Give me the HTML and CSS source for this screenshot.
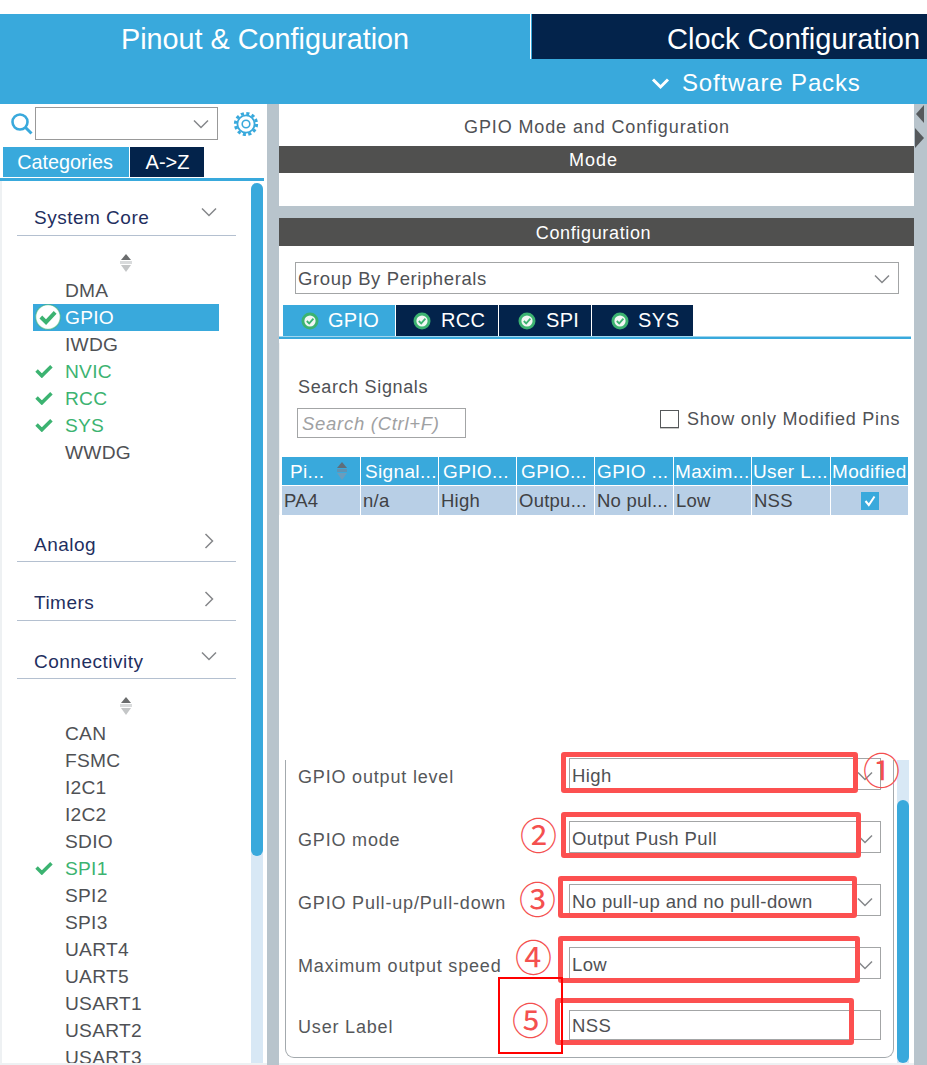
FILE: index.html
```html
<!DOCTYPE html>
<html lang="en">
<head>
<meta charset="utf-8">
<title>Pinout &amp; Configuration</title>
<link rel="stylesheet" href="styles.css">
</head>
<body>
<svg class="defs" width="0" height="0" aria-hidden="true">
  <symbol id="chev-down" viewBox="0 0 16 10"><path d="M1 1.5 8 8.5 15 1.5" fill="none" stroke="#85878a" stroke-width="1.5"/></symbol>
  <symbol id="chev-right" viewBox="0 0 10 16"><path d="M1.5 1 8.5 8 1.5 15" fill="none" stroke="#85878a" stroke-width="1.5"/></symbol>
  <symbol id="sort" viewBox="0 0 14 18"><path d="M7 0 12 6H2Z" fill="#6b6d6e"/><rect x="1" y="7" width="12" height="3" fill="#d9dbdc"/><path d="M7 18 12 11H2Z" fill="#c4c6c7"/></symbol>
  <symbol id="sort-th" viewBox="0 0 14 18"><path d="M7 0 12 6H2Z" fill="#5f6f7a"/><rect x="2" y="7" width="10" height="3" fill="#5f93b3"/><path d="M7 18 12 11H2Z" fill="#6a9dbd"/></symbol>
  <symbol id="check" viewBox="0 0 20 16"><path d="M1.5 7.5 7.5 13.5 18.5 2.5" fill="none" stroke="#3cb371" stroke-width="4"/></symbol>
  <symbol id="badge" viewBox="0 0 20 20"><circle cx="10" cy="10" r="9.5" fill="#fff"/><circle cx="10" cy="10" r="9.5" fill="none" stroke="#3cb371" stroke-width="1" opacity=".55"/><path d="M4.5 10 8.5 14 15.5 6.5" fill="none" stroke="#3cb371" stroke-width="3"/></symbol>
  <symbol id="tab-badge" viewBox="0 0 18 18"><circle cx="9" cy="9" r="8.5" fill="#3cb371"/><circle cx="9" cy="9" r="5.6" fill="#f2f7f4"/><path d="M5.8 9 8.2 11.4 12.4 6.6" fill="none" stroke="#3cb371" stroke-width="1.8"/></symbol>
</svg>

<div class="page">
  <header class="header">
    <div class="header-tabs">
      <div class="tab-pinout">Pinout &amp; Configuration</div>
      <div class="tab-clock">Clock Configuration</div>
    </div>
    <div class="packs">
      <svg class="packs-chev" width="19" height="13" viewBox="0 0 19 13"><path d="M2 2.5 9.5 10 17 2.5" fill="none" stroke="#fff" stroke-width="3"/></svg>
      <span>Software Packs</span>
    </div>
  </header>

  <div class="main">
    <aside class="side">
      <div class="search-row">
        <svg class="search-icon" width="23" height="24" viewBox="0 0 23 24"><circle cx="10" cy="10" r="7.5" fill="none" stroke="#39a9dc" stroke-width="2.6"/><path d="M15.5 15.5 21.5 21.5" stroke="#39a9dc" stroke-width="3"/></svg>
        <div class="side-combo"><svg class="chev-14" width="16" height="10"><use href="#chev-down"/></svg></div>
        <svg class="gear" width="26" height="26" viewBox="0 0 26 26">
          <g fill="none" stroke="#39a9dc">
            <circle cx="13" cy="13" r="8.6" stroke-width="1.8"/>
            <circle cx="13" cy="13" r="3.8" stroke-width="1.6"/>
            <circle cx="13" cy="13" r="10.6" stroke-width="3" stroke-dasharray="3.1 2.45"/>
          </g>
        </svg>
      </div>
      <div class="side-tabs">
        <div class="side-tab active">Categories</div>
        <div class="side-tab">A-&gt;Z</div>
      </div>
      <div class="side-rule"></div>
      <div class="side-body">
        <div class="tree">
          <div class="cat first"><span>System Core</span><svg width="16" height="10"><use href="#chev-down"/></svg></div>
          <div class="sorter"><svg width="14" height="18"><use href="#sort"/></svg></div>
          <ul class="items">
            <li>DMA</li>
            <li class="selected"><svg class="mark-badge" width="26" height="26"><use href="#badge"/></svg>GPIO</li>
            <li>IWDG</li>
            <li class="ok"><svg class="mark" width="18" height="14"><use href="#check"/></svg>NVIC</li>
            <li class="ok"><svg class="mark" width="18" height="14"><use href="#check"/></svg>RCC</li>
            <li class="ok"><svg class="mark" width="18" height="14"><use href="#check"/></svg>SYS</li>
            <li>WWDG</li>
          </ul>
          <div class="cat analog"><span>Analog</span><svg width="10" height="16"><use href="#chev-right"/></svg></div>
          <div class="cat timers"><span>Timers</span><svg width="10" height="16"><use href="#chev-right"/></svg></div>
          <div class="cat conn"><span>Connectivity</span><svg width="16" height="10"><use href="#chev-down"/></svg></div>
          <div class="sorter"><svg width="14" height="18"><use href="#sort"/></svg></div>
          <ul class="items">
            <li>CAN</li>
            <li>FSMC</li>
            <li>I2C1</li>
            <li>I2C2</li>
            <li>SDIO</li>
            <li class="ok"><svg class="mark" width="18" height="14"><use href="#check"/></svg>SPI1</li>
            <li>SPI2</li>
            <li>SPI3</li>
            <li>UART4</li>
            <li>UART5</li>
            <li>USART1</li>
            <li>USART2</li>
            <li>USART3</li>
          </ul>
        </div>
        <div class="side-scroll"><div class="side-thumb"></div></div>
      </div>
    </aside>

    <section class="content">
      <div class="content-title">GPIO Mode and Configuration</div>
      <div class="bar bar-mode">Mode</div>
      <div class="mode-body"></div>
      <div class="bar bar-config">Configuration</div>
      <div class="config">
        <div class="group-row">
          <div class="group-select"><span>Group By Peripherals</span><svg width="16" height="10"><use href="#chev-down"/></svg></div>
        </div>
        <div class="peri-tabs">
          <div class="peri-tab t1 active"><svg width="18" height="18"><use href="#tab-badge"/></svg>GPIO</div>
          <div class="peri-tab t2"><svg width="18" height="18"><use href="#tab-badge"/></svg>RCC</div>
          <div class="peri-tab t3"><svg width="18" height="18"><use href="#tab-badge"/></svg>SPI</div>
          <div class="peri-tab t4"><svg width="18" height="18"><use href="#tab-badge"/></svg>SYS</div>
        </div>
        <div class="peri-rule"></div>
        <div class="signals">
          <div class="search-label">Search Signals</div>
          <div class="signals-tools">
            <div class="signal-search">Search (Ctrl+F)</div>
            <label class="modified"><span class="box"></span><span>Show only Modified Pins</span></label>
          </div>
          <div class="table">
            <div class="th c-pin"><span>Pi...</span><svg width="14" height="18"><use href="#sort-th"/></svg></div>
            <div class="th">Signal...</div>
            <div class="th">GPIO...</div>
            <div class="th">GPIO...</div>
            <div class="th narrow">GPIO ...</div>
            <div class="th tight">Maxim...</div>
            <div class="th tight">User L...</div>
            <div class="th tight">Modified</div>
            <div class="td">PA4</div>
            <div class="td">n/a</div>
            <div class="td">High</div>
            <div class="td">Outpu...</div>
            <div class="td">No pul...</div>
            <div class="td">Low</div>
            <div class="td">NSS</div>
            <div class="td center"><span class="tick"><svg width="18" height="18" viewBox="0 0 18 18"><path d="M4.5 9 7.8 13 13.5 4.5" fill="none" stroke="#fff" stroke-width="2"/></svg></span></div>
          </div>
        </div>
        <div class="form-area">
          <div class="form">
            <div class="form-row"><span>GPIO output level</span><div class="field">High<svg width="16" height="10"><use href="#chev-down"/></svg></div></div>
            <div class="form-row"><span>GPIO mode</span><div class="field">Output Push Pull<svg width="16" height="10"><use href="#chev-down"/></svg></div></div>
            <div class="form-row"><span>GPIO Pull-up/Pull-down</span><div class="field">No pull-up and no pull-down<svg width="16" height="10"><use href="#chev-down"/></svg></div></div>
            <div class="form-row"><span>Maximum output speed</span><div class="field">Low<svg width="16" height="10"><use href="#chev-down"/></svg></div></div>
            <div class="form-row"><span>User Label</span><div class="field">NSS</div></div>
          </div>
          <div class="form-scroll"><div class="form-thumb"></div></div>
        </div>
      </div>
    </section>

    <div class="right-gutter">
      <svg width="13" height="46" viewBox="0 0 13 46"><path d="M10 0V18L2 9Z" fill="#55595c"/><path d="M1 23 10 33 1 43Z" fill="#55595c"/></svg>
    </div>
  </div>

  <div class="note r1"></div>
  <div class="note r2"></div>
  <div class="note r3"></div>
  <div class="note r4"></div>
  <div class="note r5"></div>
  <div class="note-thin"></div>
  <span class="num n1">①</span>
  <span class="num n2">②</span>
  <span class="num n3">③</span>
  <span class="num n4">④</span>
  <span class="num n5">⑤</span>
</div>
</body>
</html>
```

FILE: styles.css
```css
* { box-sizing: border-box; }
html, body { margin: 0; padding: 0; background: #fff; }
body { font-family: "Liberation Sans", Arial, sans-serif; color: #4f5155; overflow: hidden; }
.defs { position: absolute; }
.page { position: relative; width: 927px; height: 1065px; padding-top: 14px; overflow: hidden; }

.header { height: 90px; background: #39a9dc; color: #fff; }
.header-tabs { display: flex; height: 45px; }
.tab-pinout { width: 531px; text-align: center; font-size: 28.8px; line-height: 51px; border-right: 1px solid #fff; }
.tab-clock { flex: 1; margin-left: 1px; background: #03234b; font-size: 29px; line-height: 51px; white-space: nowrap; padding-left: 135px; overflow: hidden; }
.packs { height: 45px; display: flex; align-items: center; padding-left: 651px; gap: 12px; font-size: 24px; letter-spacing: .85px; padding-top: 3px; }

.main { display: flex; height: 961px; background: #b8c4cc; }

.side { width: 267px; background: #fff; display: flex; flex-direction: column; border-bottom: 2px solid #eef1f3; }
.search-row { height: 43px; display: flex; align-items: center; padding-left: 10px; padding-bottom: 4px; }
.search-icon { flex: none; }
.side-combo { width: 183px; height: 33px; margin-left: 2px; border: 1px solid #999; display: flex; align-items: center; justify-content: flex-end; padding-right: 8px; }
.gear { margin-left: 15px; flex: none; }
.side-tabs { display: flex; height: 30px; padding-left: 3px; gap: 1px; }
.side-tab { background: #03234b; color: #fff; font-size: 20px; line-height: 30px; text-align: center; width: 74px; padding-left: 1px; }
.side-tab.active { background: #39a9dc; width: 126px; font-size: 19.8px; padding: 0 2px 0 0; }
.side-rule { height: 3px; width: 264px; border-top: 1px solid #39a9dc; border-bottom: 2px solid #39a9dc; margin-top: 1px; }
.side-body { flex: 1; display: flex; border-left: 2px solid #eef1f3; min-height: 0; padding-top: 2px; }
.tree { width: 249px; overflow: hidden; }
.cat { margin: 0 0 0 15px; width: 219px; display: flex; justify-content: space-between; align-items: flex-start; border-bottom: 1px solid #b4c0d0; color: #1f2f5f; font-size: 19px; letter-spacing: .5px; padding: 0 0 0 17px; height: 30px; line-height: 24px; }
.cat svg { margin: 2px 19px 0 0; flex: none; }
.cat span { padding-top: 1px; }
.cat.first { margin-top: 22px; height: 31px; }
.cat.analog { margin-top: 66px; }
.cat.timers { margin-top: 28px; height: 31px; }
.cat.conn { margin-top: 28px; height: 30px; }
.cat.analog svg, .cat.timers svg { margin: 1px 22px 0 0; }
.sorter { height: 41px; padding: 18px 0 0 117px; line-height: 0; }
.items { list-style: none; margin: 0; padding: 0; }
.items li { position: relative; height: 27px; line-height: 27px; padding-left: 63px; font-size: 19.2px; letter-spacing: .25px; white-space: nowrap; }
.items li.selected { background: #39a9dc; color: #fff; margin-left: 31px; width: 186px; padding-left: 32px; }
.items li.ok { color: #3cb371; }
.mark { position: absolute; left: 33px; top: 6px; }
.mark-badge { position: absolute; left: 2px; top: 0; }
.side-scroll { width: 12px; background: #d8e8f5; border-radius: 6px 6px 0 0; flex: none; }
.side-thumb { height: 673px; background: #39a9dc; border-radius: 6px; }

.content { width: 635px; flex: none; display: flex; flex-direction: column; margin-left: 12px; }
.content-title { height: 42px; background: #fff; text-align: center; font-size: 18px; letter-spacing: .88px; line-height: 46px; padding-left: 1px; }
.bar { background: #50504f; color: #fff; text-align: center; font-size: 18px; padding-right: 6px; }
.bar-mode { height: 27px; line-height: 28px; letter-spacing: 1px; }
.mode-body { height: 33px; background: #fff; }
.bar-config { height: 28px; margin-top: 12px; line-height: 30px; letter-spacing: .65px; }
.config { flex: 1; background: #fff; min-height: 0; display: flex; flex-direction: column; border-bottom: 2px solid #eef1f3; }
.group-row { padding: 16px 15px 0 16px; }
.group-select { height: 32px; border: 1px solid #a3a5a6; display: flex; justify-content: space-between; align-items: center; padding: 2px 8px 0 2px; font-size: 18.5px; letter-spacing: .6px; }
.peri-tabs { display: flex; gap: 1px; padding-left: 4px; margin-top: 11px; height: 31px; }
.peri-tab { background: #03234b; color: #fff; font-size: 20px; display: flex; align-items: center; letter-spacing: .3px; gap: 9px; height: 31px; }
.t1 { width: 112px; padding-left: 18px; background: #39a9dc; }
.t2 { width: 102px; padding-left: 17px; gap: 10px; }
.t3 { width: 92px; padding-left: 19px; gap: 10px; }
.t4 { width: 101px; padding-left: 19px; gap: 9px; letter-spacing: .5px; }
.peri-rule { height: 3px; background: #39a9dc; box-shadow: inset 0 1px 0 #9fd6ef; margin-top: 0; width: 632px; }
.signals { padding: 34px 0 0 2px; background: #fff; border-left: 1px solid #f2f4f5; margin-top: 4px; }
.search-label { font-size: 18px; letter-spacing: .65px; height: 21px; line-height: 21px; padding-left: 16px; }
.signals-tools { display: flex; align-items: flex-start; margin-top: 10px; padding-left: 15px; height: 49px; }
.signal-search { width: 169px; height: 30px; border: 1px solid #a3a5a6; color: #9fa1a3; font-style: italic; font-size: 18.5px; line-height: 30px; padding-left: 4px; letter-spacing: .72px; flex: none; }
.modified { display: flex; align-items: center; margin-left: 194px; gap: 8px; font-size: 18px; letter-spacing: .75px; white-space: nowrap; height: 22px; }
.box { width: 19px; height: 18px; border: 1px solid #55585a; background: #fff; box-shadow: 0 1px 0 #c8c8c8; flex: none; }
.table { display: grid; grid-template-columns: 79px 78px 78px 78px 79px 78px 79px 78px; grid-template-rows: 29px 29px; width: 627px; }
.th { background: #39a9dc; color: #fff; font-size: 19px; letter-spacing: .35px; line-height: 29px; padding-left: 4px; margin-right: 1px; margin-bottom: 1px; white-space: nowrap; overflow: hidden; }
.th.narrow { padding-left: 2px; }
.th.tight { padding-left: 1px; letter-spacing: .35px; }
.c-pin { display: flex; justify-content: space-between; padding: 0 11px 0 8px; align-items: center; }
.td { background: #b8cfe6; color: #3f4144; font-size: 18.5px; line-height: 30px; padding-left: 2px; margin-right: 1px; letter-spacing: .25px; white-space: nowrap; overflow: hidden; }
.td.center { display: flex; align-items: center; justify-content: center; padding: 0; }
.tick { width: 18px; height: 18px; background: #39a9dc; display: block; line-height: 0; }

.form-area { flex: 1; display: flex; align-items: flex-start; padding: 0 5px 0 6px; background: #fff; min-height: 0; }
.form { flex: none; width: 609px; margin-top: 245px; border: 1px solid #a3a9ad; border-top: 0; border-radius: 0 0 9px 9px; height: 298px; padding: 0 12px 0 12px; }
.form-row { display: flex; justify-content: space-between; align-items: center; height: 32px; margin-bottom: 31px; font-size: 18px; letter-spacing: .82px; color: #55575a; }
.form-row span { padding-top: 2px; }
.form-row:last-child { margin-bottom: 0; height: 30px; margin-top: -1px; }
.field { width: 312px; height: 32px; margin-bottom: 4px; border: 1px solid #a3a5a6; color: #4f5155; display: flex; align-items: center; justify-content: space-between; padding: 4px 7px 0 2px; background: #fff; white-space: nowrap; font-size: 18.5px; letter-spacing: .38px; flex: none; }
.form-row:last-child .field { height: 30px; margin-bottom: 2px; padding-top: 2px; }
.form-scroll { width: 12px; margin: 245px 0 0 3px; background: #d8e8f5; height: 303px; flex: none; padding-top: 40px; }
.form-thumb { height: 263px; background: #39a9dc; border-radius: 6px; }
.right-gutter { flex: 1; padding: 1px 0 0 0; line-height: 0; }

.note { position: absolute; border: 5px solid #fc5050; border-radius: 3px; }
.r1 { left: 561px; top: 752px; width: 297px; height: 41px; }
.r2 { left: 561px; top: 812px; width: 300px; height: 46px; }
.r3 { left: 558px; top: 876px; width: 299px; height: 42px; }
.r4 { left: 558px; top: 936px; width: 302px; height: 47px; }
.r5 { left: 555px; top: 998px; width: 299px; height: 47px; }
.note-thin { position: absolute; left: 498px; top: 977px; width: 65px; height: 77px; border: 2px solid #f00; }
.num { position: absolute; color: #f4504f; font-family: "Noto Sans CJK SC", sans-serif; font-size: 37px; line-height: 36px; width: 37px; text-align: center; }
.n1 { left: 863px; top: 751px; }
.n2 { left: 520px; top: 816px; }
.n3 { left: 519px; top: 880px; }
.n4 { left: 515px; top: 938px; }
.n5 { left: 512px; top: 1001px; }
```
